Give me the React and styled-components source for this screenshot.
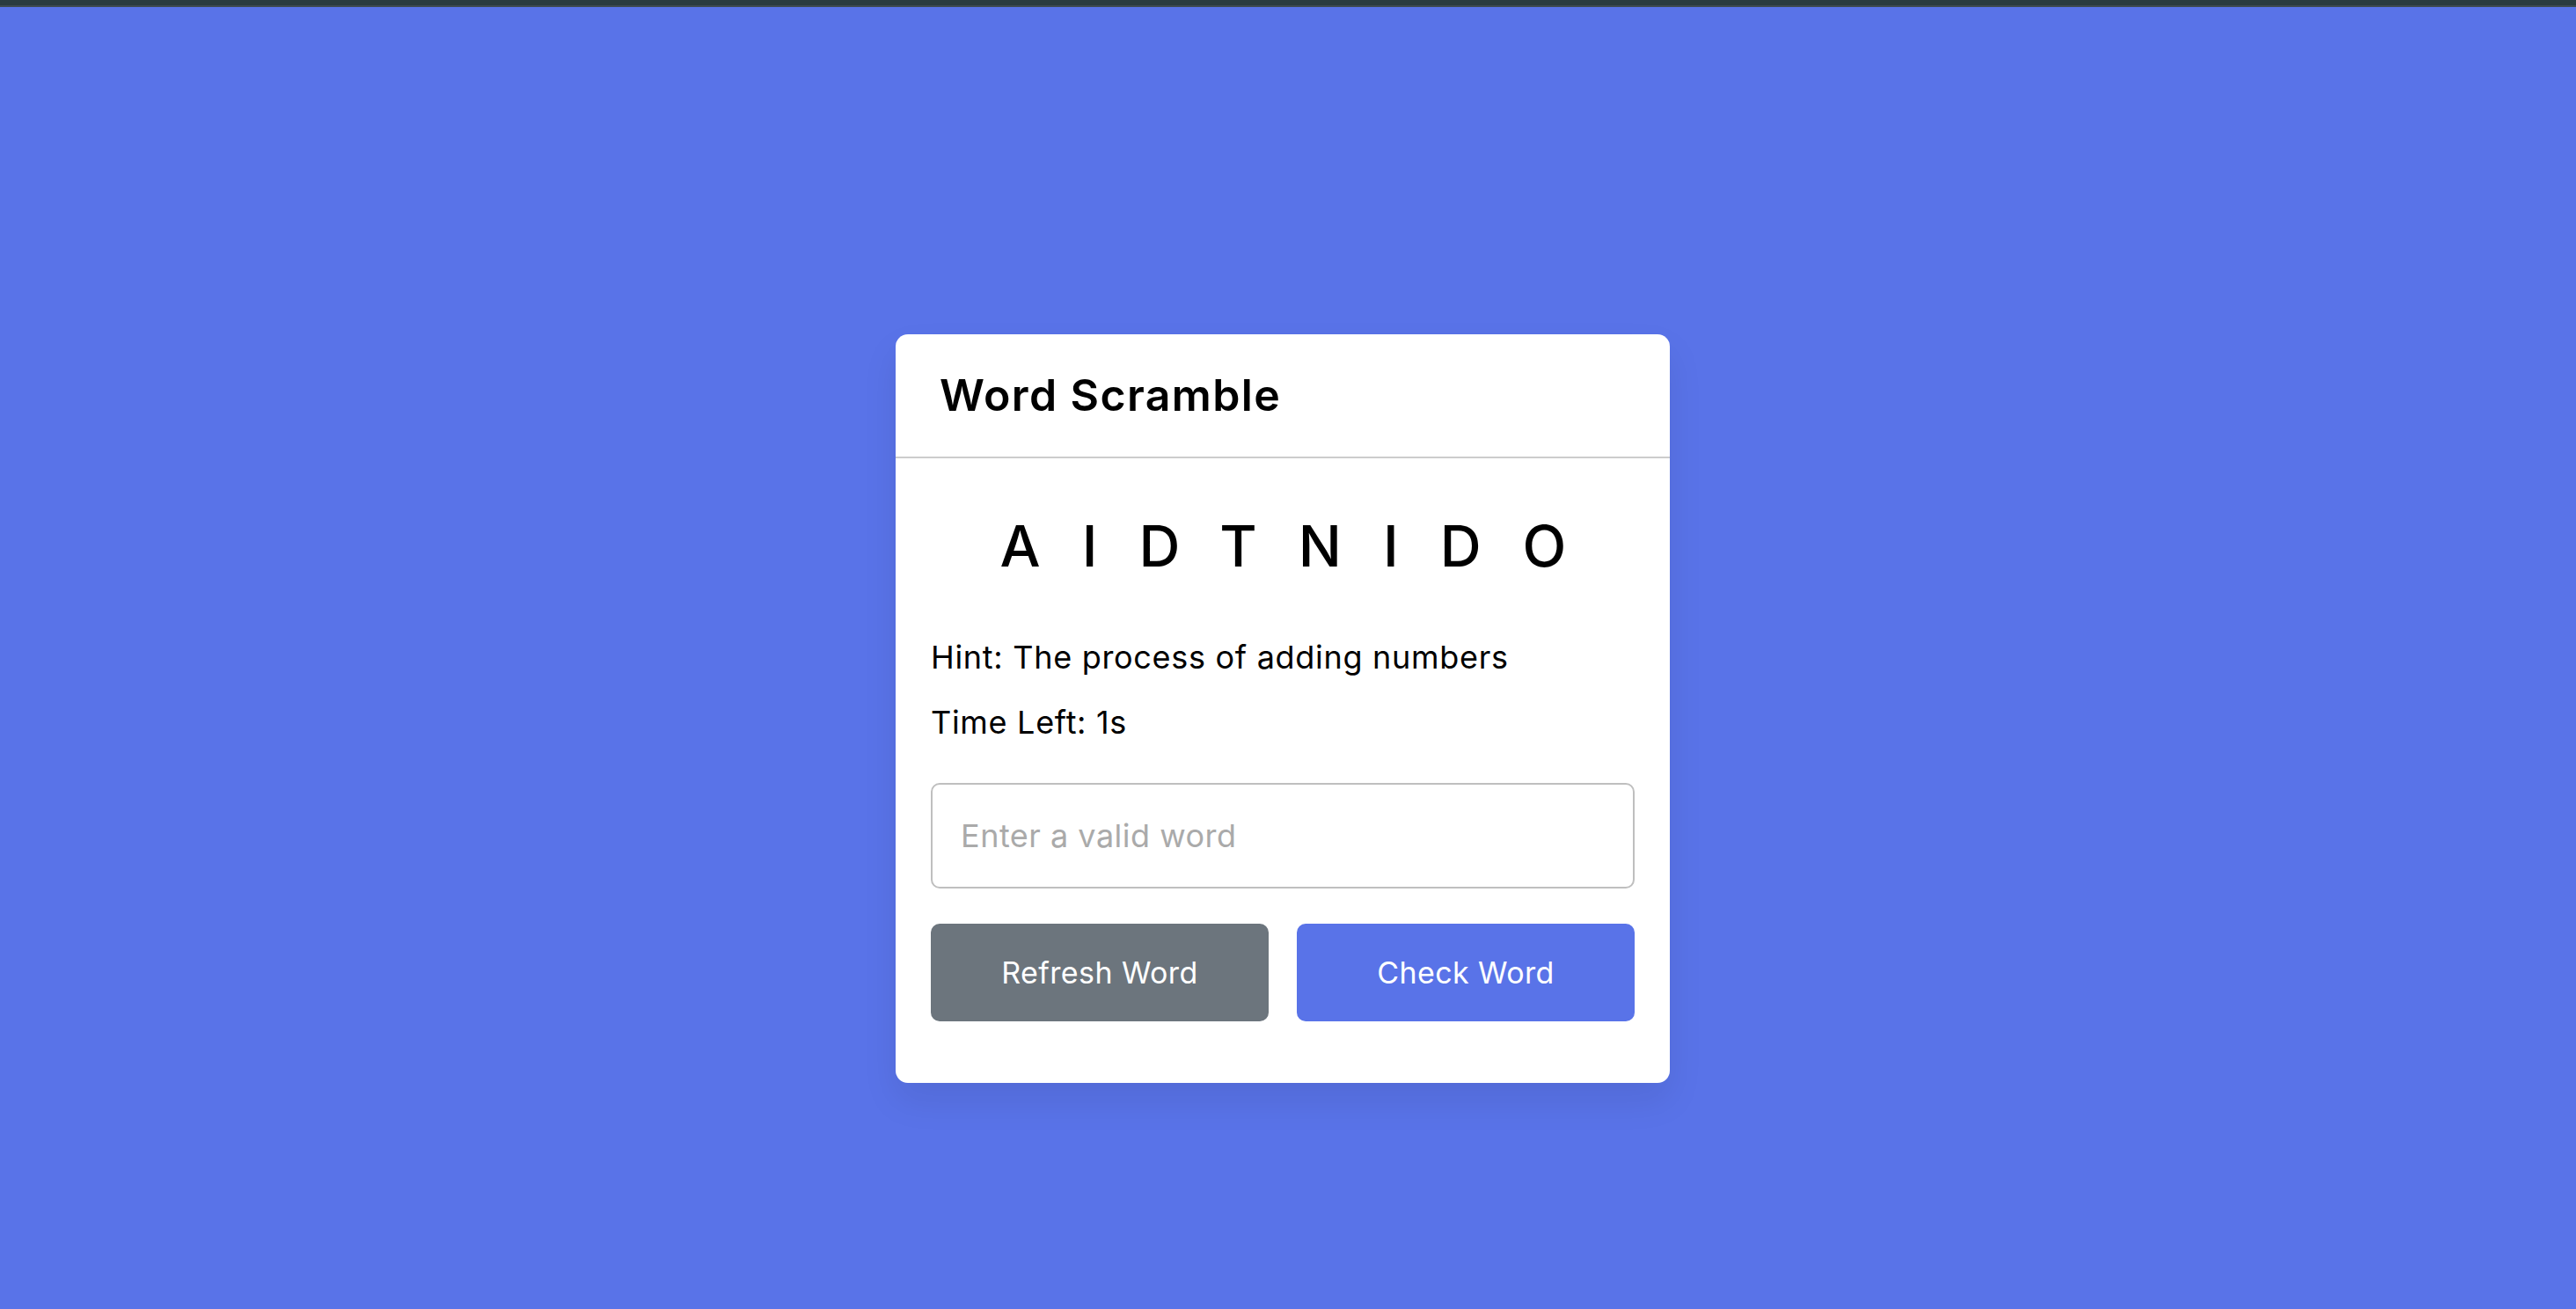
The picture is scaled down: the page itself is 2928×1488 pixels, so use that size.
import React from "react";
import styled, { createGlobalStyle } from "styled-components";

const Global = createGlobalStyle`
  html, body {
    margin: 0;
    padding: 0;
    height: 100%;
    background: #5973e8;
    font-family: Inter, "Open Sans", "Liberation Sans", sans-serif;
  }
  * { box-sizing: border-box; }
`;

const Page = styled.div`
  min-height: 100vh;
  display: flex;
  flex-direction: column;
`;

const TopBar = styled.div`
  height: 8px;
  background: #2a3b40;
  border-bottom: 2px solid #3e4a50;
`;

const Stage = styled.main`
  flex: 1;
  display: flex;
  justify-content: center;
  align-items: flex-start;
  padding: 372px 12px 0 0;
`;

const Card = styled.section`
  width: 880px;
  background: #fff;
  border-radius: 14px;
  box-shadow: 0 20px 40px rgba(0, 0, 0, 0.08);
`;

const Header = styled.h2`
  margin: 0;
  padding: 32px 50px;
  font-size: 50px;
  line-height: 75px;
  font-weight: 600;
  letter-spacing: 1.4px;
  color: #000;
  border-bottom: 2px solid #cccccc;
`;

const Content = styled.div`
  margin: 50px 40px 70px;
  display: flex;
  flex-direction: column;
`;

const Word = styled.p`
  margin: 0 -48px 0 0;
  text-align: center;
  font-size: 65px;
  line-height: 99px;
  font-weight: 500;
  letter-spacing: 47px;
  text-transform: uppercase;
  color: #000;
`;

const Details = styled.div`
  margin: 50px 0 42px;
  display: flex;
  flex-direction: column;
  gap: 20px;
`;

const Line = styled.p`
  margin: 0;
  font-size: 36px;
  line-height: 54px;
  letter-spacing: 0.7px;
  color: #000;
`;

const Input = styled.input`
  height: 120px;
  width: 100%;
  outline: none;
  font-family: inherit;
  font-size: 36px;
  letter-spacing: 0.5px;
  padding: 0 32px;
  border-radius: 10px;
  border: 2px solid #bfbfbf;
  &::placeholder { color: #aaaaaa; }
`;

const Buttons = styled.div`
  margin-top: 40px;
  display: flex;
  gap: 32px;
`;

const Button = styled.button`
  flex: 1;
  border: none;
  outline: none;
  cursor: pointer;
  padding: 30px 0;
  font-family: inherit;
  font-size: 34px;
  line-height: 51px;
  letter-spacing: 0.4px;
  color: #fff;
  border-radius: 10px;
  background: ${(p) => (p.$variant === "refresh" ? "#6c757d" : "#5973e8")};
`;

export default function App() {
  return (
    <>
      <Global />
      <Page>
        <TopBar />
        <Stage>
          <Card>
            <Header>Word Scramble</Header>
            <Content>
              <Word>aidtnido</Word>
              <Details>
                <Line>Hint: The process of adding numbers</Line>
                <Line>Time Left: 1s</Line>
              </Details>
              <Input type="text" placeholder="Enter a valid word" spellCheck={false} />
              <Buttons>
                <Button $variant="refresh">Refresh Word</Button>
                <Button $variant="check">Check Word</Button>
              </Buttons>
            </Content>
          </Card>
        </Stage>
      </Page>
    </>
  );
}
